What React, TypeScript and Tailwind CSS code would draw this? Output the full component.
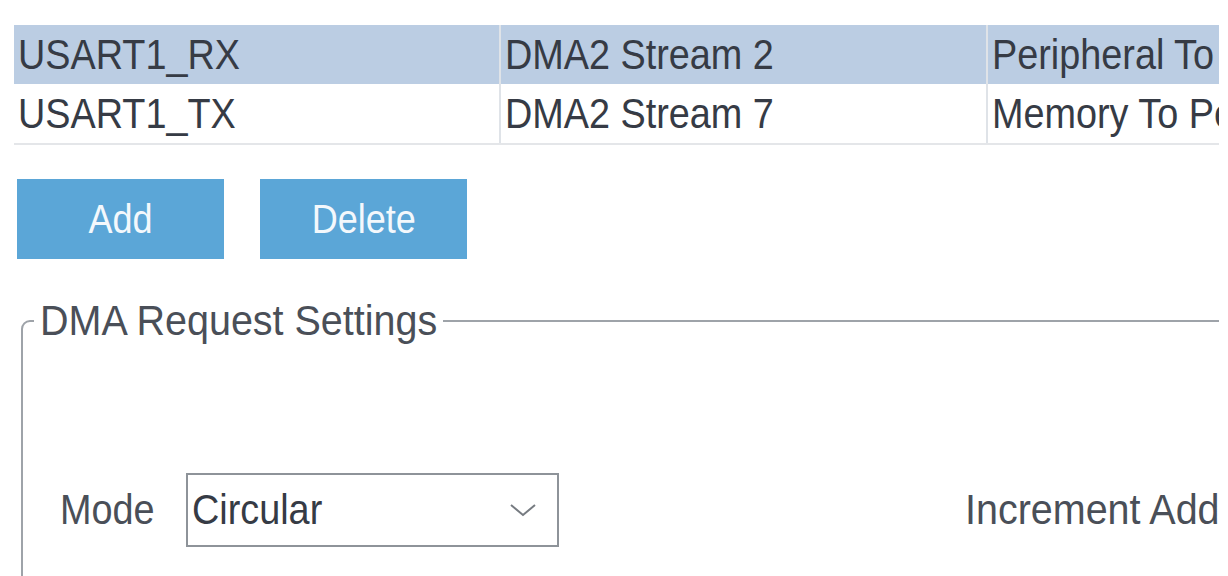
const rows = [
  { signal: "USART1_RX", stream: "DMA2 Stream 2", dir: "Peripheral To Memory", sel: true },
  { signal: "USART1_TX", stream: "DMA2 Stream 7", dir: "Memory To Peripheral", sel: false },
];

// the reference text is a narrow rendering of Arial, so squeeze it a bit
function Narrow({ children, className = "origin-left scale-x-[0.9]" }: { children: React.ReactNode; className?: string }) {
  return <span className={"inline-block whitespace-nowrap " + className}>{children}</span>;
}

export default function App() {
  return (
    <div className="w-[1219px] h-[576px] overflow-hidden bg-white pt-[25px] pl-[14px] font-['Liberation_Sans',Arial,sans-serif]">
      {/* channel table */}
      <div className="w-[1400px] border-b-2 border-[#e4e6e9] text-[42px] leading-none text-[#363b45]">
        {rows.map((r) => (
          <div
            key={r.signal}
            className={
              "grid grid-cols-[485px_487px_1fr] h-[59px] " +
              (r.sel ? "bg-[#bbcde3]" : "bg-white")
            }
          >
            <div className="flex items-center pl-[4px]">
              <Narrow>{r.signal}</Narrow>
            </div>
            <div className="flex items-center border-l-2 border-[#dfe3e8] pl-[4px]">
              <Narrow>{r.stream}</Narrow>
            </div>
            <div className="flex items-center border-l-2 border-[#dfe3e8] pl-[4px]">
              <Narrow>{r.dir}</Narrow>
            </div>
          </div>
        ))}
      </div>

      {/* actions */}
      <div className="mt-[34px] ml-[3px] flex gap-[36px]">
        <button className="w-[207px] h-[80px] bg-[#5ba6d7] text-[40px] text-[#f3f8fc] flex items-center justify-center">
          <Narrow className="origin-center scale-x-[0.9]">Add</Narrow>
        </button>
        <button className="w-[207px] h-[80px] bg-[#5ba6d7] text-[40px] text-[#f3f8fc] flex items-center justify-center">
          <Narrow className="origin-center scale-x-[0.9]">Delete</Narrow>
        </button>
      </div>

      {/* request settings */}
      <fieldset className="mt-[38px] ml-[7px] w-[1400px] h-[400px] border-2 border-[#9ea3a9] rounded-tl-[9px] pl-[11px]">
        <legend className="w-[409px] px-[6px] text-[42px] leading-[48px] text-[#4a4f58]">
          <Narrow className="origin-left scale-x-[0.94]">DMA Request Settings</Narrow>
        </legend>
        <div className="pt-[128px] pl-[26px] flex items-center text-[42px] leading-none text-[#4a4f58]">
          <div className="w-[126px]">
            <Narrow>Mode</Narrow>
          </div>
          <div className="w-[373px] h-[74px] border-2 border-[#8e9399] flex items-center justify-between pl-[4px] pr-[20px] text-[#363b45]">
            <Narrow>Circular</Narrow>
            <svg width="28" height="14" viewBox="0 0 28 14" fill="none">
              <path d="M2 2 L14 12 L26 2" stroke="#767b81" strokeWidth="2" />
            </svg>
          </div>
          <div className="ml-[406px]">
            <Narrow className="origin-left scale-x-[0.94]">Increment Address</Narrow>
          </div>
        </div>
      </fieldset>
    </div>
  );
}
